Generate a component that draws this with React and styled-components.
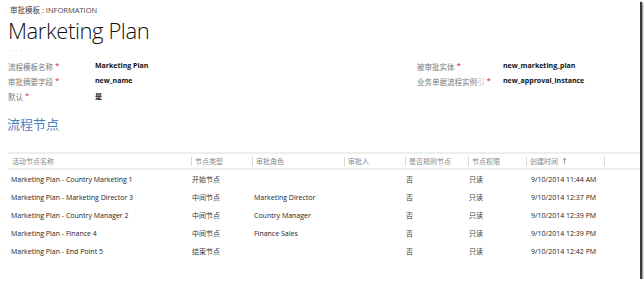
import React from "react";
import styled, { createGlobalStyle } from "styled-components";

const Global = createGlobalStyle`
  html, body { margin: 0; padding: 0; background: #fff; }
  body { font-family: "Open Sans", "Noto Sans CJK SC", sans-serif; color: #222; }
`;

const Frame = styled.div`
  width: 640px;
  height: 279px;
  background: #fff;
  box-shadow: 2px 2px 1px #3a3a3a, 3px 3px 2px #9a9a9a;
  overflow: hidden;
  font-family: "Open Sans", "Noto Sans CJK SC", sans-serif;
`;

const Crumb = styled.div`
  padding: 5px 0 0 10px;
  font-size: 7.5px;
  line-height: 10px;
  color: #444;
`;

const Title = styled.h1`
  margin: 0;
  padding: 2px 0 0 8px;
  font-size: 22px;
  font-weight: 300;
  line-height: 26px;
  color: #111;
  letter-spacing: -0.4px;
`;

const Dots = styled.div`
  padding: 2px 0 0 10px;
  height: 12px;
  font-size: 8px;
  line-height: 10px;
  color: #b8c4dc;
  letter-spacing: 3px;
`;

const Form = styled.div`
  display: grid;
  grid-template-columns: 409px 1fr;
  padding: 1px 0 0 8px;
`;

const FieldCol = styled.div`
  display: flex;
  flex-direction: column;
`;

const Field = styled.div`
  display: flex;
  align-items: center;
  height: 15px;
`;

const Label = styled.div`
  width: ${(p) => p.w}px;
  flex: none;
  font-size: 7.5px;
  line-height: 12px;
  color: #7a7a7a;
  white-space: nowrap;
`;

const Star = styled.span`
  color: #e02020;
  font-size: 8px;
  vertical-align: 2px;
  margin-left: 2px;
`;

const Fade = styled.span`
  color: #c4c4c4;
`;

const Value = styled.div`
  font-size: 7px;
  font-weight: 700;
  color: #111;
`;

const Section = styled.h2`
  margin: 0;
  padding: 13px 0 0 7px;
  font-size: 13px;
  font-weight: 400;
  line-height: 16px;
  color: #4e7fbe;
  font-family: "Noto Sans CJK SC", sans-serif;
`;

const Table = styled.div`
  margin: 20px 0 0 8px;
`;

const cols = "183px 61px 92px 61px 63px 58px 78px 1fr";

const HeadRow = styled.div`
  display: grid;
  grid-template-columns: ${cols};
  height: 14px;
  border-top: 2px solid #eeeeee;
  border-bottom: 2px solid #f0f0f0;
  align-items: center;
`;

const HeadCell = styled.div`
  font-size: 7px;
  color: #888;
  padding-left: ${(p) => (p.first ? 4 : 3)}px;
  border-left: ${(p) => (p.first ? "none" : "1px solid #d8d8d8")};
  height: 9px;
  line-height: 9px;
  white-space: nowrap;
`;

const Arrow = styled.span`
  margin-left: 3px;
  color: #444;
`;

const Row = styled.div`
  display: grid;
  grid-template-columns: ${cols};
  height: 18px;
  align-items: center;
`;

const Cell = styled.div`
  font-size: 7px;
  color: ${(p) => (p.cjk ? "#3a3a3a" : "#222")};
  padding-left: ${(p) => p.pad}px;
  white-space: nowrap;
`;

const rows = [
  ["Marketing Plan - Country Marketing 1", "开始节点", "", "9/10/2014 11:44 AM"],
  ["Marketing Plan - Marketing Director 3", "中间节点", "Marketing Director", "9/10/2014 12:37 PM"],
  ["Marketing Plan - Country Manager 2", "中间节点", "Country Manager", "9/10/2014 12:39 PM"],
  ["Marketing Plan - Finance 4", "中间节点", "Finance Sales", "9/10/2014 12:39 PM"],
  ["Marketing Plan - End Point 5", "结束节点", "", "9/10/2014 12:42 PM"],
];

export default function App() {
  return (
    <>
      <Global />
      <Frame>
        <Crumb>审批模板 : INFORMATION</Crumb>
        <Title>Marketing Plan</Title>
        <Dots>····</Dots>
        <Form>
          <FieldCol>
            <Field>
              <Label w={87}>流程模板名称<Star>*</Star></Label>
              <Value>Marketing Plan</Value>
            </Field>
            <Field>
              <Label w={87}>审批摘要字段<Star>*</Star></Label>
              <Value>new_name</Value>
            </Field>
            <Field>
              <Label w={87}>默认<Star>*</Star></Label>
              <Value>是</Value>
            </Field>
          </FieldCol>
          <FieldCol>
            <Field>
              <Label w={86}>被审批实体<Star>*</Star></Label>
              <Value>new_marketing_plan</Value>
            </Field>
            <Field>
              <Label w={86}>业务单据流程实例<Fade>引</Fade><Star>*</Star></Label>
              <Value>new_approval_instance</Value>
            </Field>
          </FieldCol>
        </Form>
        <Section>流程节点</Section>
        <Table>
          <HeadRow>
            <HeadCell first>活动节点名称</HeadCell>
            <HeadCell>节点类型</HeadCell>
            <HeadCell>审批角色</HeadCell>
            <HeadCell>审批人</HeadCell>
            <HeadCell>是否规则节点</HeadCell>
            <HeadCell>节点权限</HeadCell>
            <HeadCell>创建时间<Arrow>↑</Arrow></HeadCell>
            <HeadCell />
          </HeadRow>
          {rows.map((r) => (
            <Row key={r[0]}>
              <Cell pad={3}>{r[0]}</Cell>
              <Cell pad={1} cjk>{r[1]}</Cell>
              <Cell pad={2}>{r[2]}</Cell>
              <Cell pad={2}></Cell>
              <Cell pad={1} cjk>否</Cell>
              <Cell pad={1} cjk>只读</Cell>
              <Cell pad={5}>{r[3]}</Cell>
              <Cell pad={0} />
            </Row>
          ))}
        </Table>
      </Frame>
    </>
  );
}
